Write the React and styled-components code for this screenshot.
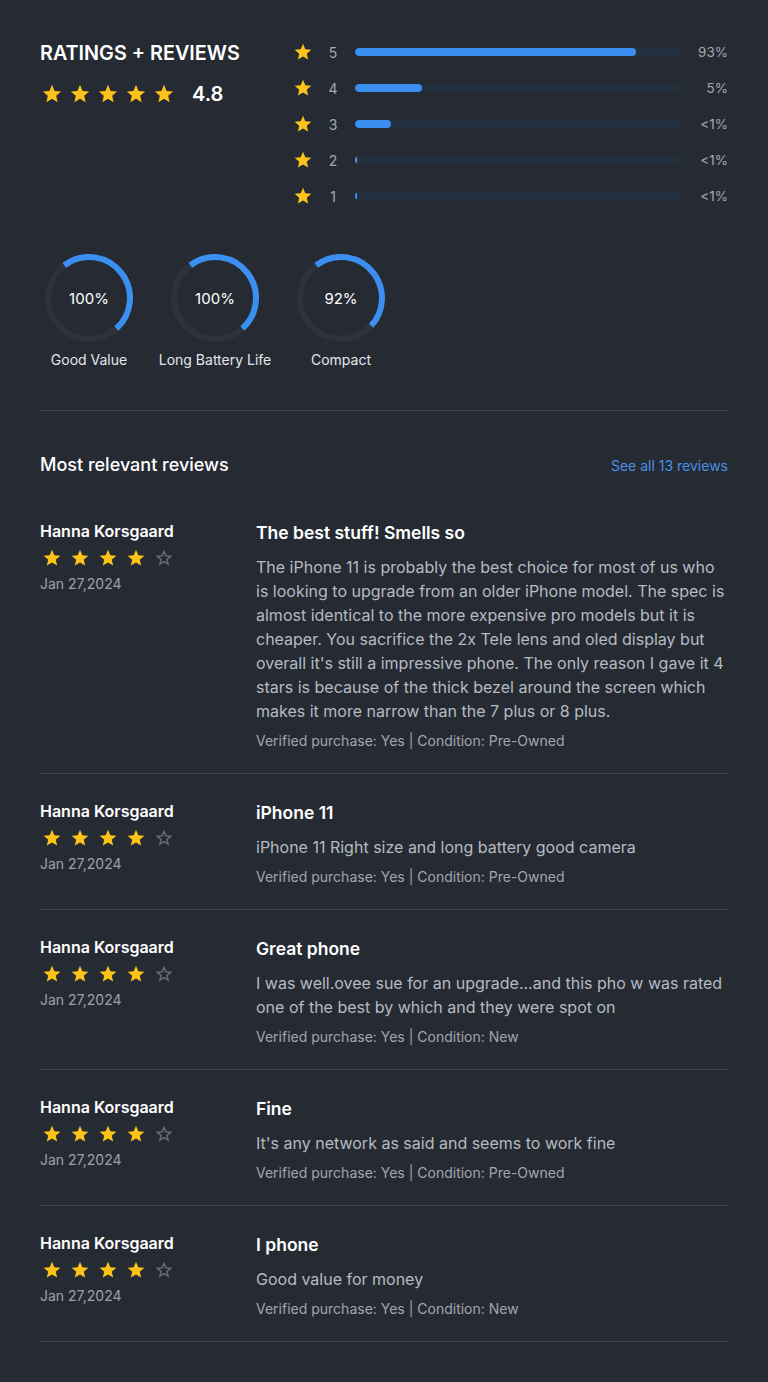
import React from "react";
import styled, { createGlobalStyle } from "styled-components";

const GlobalStyle = createGlobalStyle`
  html, body {
    margin: 0;
    padding: 0;
    background: #262b33;
  }
  body {
    font-family: Inter, "Noto Sans", "Liberation Sans", sans-serif;
    color: #f1f3f5;
    -webkit-font-smoothing: antialiased;
  }
`;

const Page = styled.div`
  width: 768px;
  box-sizing: border-box;
  padding: 40px 40px 40px;
  min-height: 1382px;
`;

const Summary = styled.section`
  display: grid;
  grid-template-columns: 253px 1fr;
`;

const Overall = styled.div`
  display: flex;
  flex-direction: column;
  gap: 17px;
  padding-top: 1px;
`;

const Heading = styled.h2`
  margin: 0;
  font-size: 19.8px;
  line-height: 24px;
  font-weight: 600;
  color: #ffffff;
`;

const ScoreRow = styled.div`
  display: flex;
  align-items: center;
`;

const Stars = styled.div`
  display: flex;
  gap: ${(p) => p.$gap}px;
  margin-left: ${(p) => p.$before || 0}px;
  margin-right: ${(p) => p.$after || 0}px;
`;

const Score = styled.span`
  font-size: 20px;
  font-weight: 600;
  color: #ffffff;
`;

const Bars = styled.div`
  display: flex;
  flex-direction: column;
  gap: 12px;
`;

const BarRow = styled.div`
  display: grid;
  grid-template-columns: 18px 44px 1fr 46px;
  align-items: center;
  height: 24px;
`;

const BarNum = styled.span`
  text-align: center;
  font-size: 14px;
  color: #a3a8b0;
`;

const Track = styled.div`
  height: 8px;
  border-radius: 4px;
  background: #243040;
  overflow: hidden;
`;

const Fill = styled.div`
  height: 100%;
  border-radius: 4px;
  background: #3b8ff0;
`;

const Pct = styled.span`
  text-align: right;
  font-size: 13.5px;
  color: #a3a8b0;
`;

const Features = styled.div`
  display: flex;
  gap: 28px;
  margin-top: 46px;
  padding-bottom: 40px;
  border-bottom: 1px solid #3d434c;
`;

const Feature = styled.div`
  width: 98px;
  display: flex;
  flex-direction: column;
  align-items: center;
  gap: 8px;
`;

const Ring = styled.div`
  position: relative;
  width: 88px;
  height: 88px;

  & > span {
    position: absolute;
    inset: 0;
    display: flex;
    align-items: center;
    justify-content: center;
    font-size: 15px;
    font-weight: 400;
    color: #ffffff;
  }
`;

const FeatureLabel = styled.span`
  white-space: nowrap;
  font-size: 14px;
  line-height: 20px;
  color: #e3e6ea;
`;

const ListHeader = styled.div`
  display: flex;
  justify-content: space-between;
  align-items: center;
  padding: 42px 0 17px;
`;

const ListTitle = styled.h3`
  margin: 0;
  font-size: 18px;
  line-height: 24px;
  font-weight: 500;
  color: #ffffff;
`;

const SeeAll = styled.a`
  font-size: 14px;
  color: #4a90e6;
  text-decoration: none;
`;

const Review = styled.article`
  display: grid;
  grid-template-columns: 216px 1fr;
  padding: 27px 0 22px;
  border-bottom: 1px solid #3d434c;
`;

const Author = styled.div`
  display: flex;
  flex-direction: column;
`;

const Name = styled.span`
  font-size: 16px;
  line-height: 20px;
  font-weight: 600;
  color: #ffffff;
  margin-bottom: 7px;
`;

const DateText = styled.span`
  font-size: 14px;
  line-height: 20px;
  color: #9ca1a9;
  margin-top: 6px;
`;

const Body = styled.div`
  display: flex;
  flex-direction: column;
`;

const Title = styled.h4`
  margin: 0 0 10px;
  font-size: 17.5px;
  line-height: 24px;
  font-weight: 600;
  color: #ffffff;
`;

const Text = styled.p`
  margin: 0 0 8px;
  font-size: 16px;
  line-height: 24px;
  color: #b6bac2;
`;

const Meta = styled.span`
  font-size: 14px;
  line-height: 20px;
  color: #a1a6ae;
`;

const StarIcon = ({ size = 20, filled = true }) => (
  <svg width={size} height={size} viewBox="0 0 24 24" style={{ display: "block" }}>
    {filled ? (
      <path
        fill="#fdc319"
        d="M12 17.27L18.18 21l-1.64-7.03L22 9.24l-7.19-.61L12 2 9.19 8.63 2 9.24l5.46 4.73L5.82 21z"
      />
    ) : (
      <path
        fill="#6d727a"
        d="M22 9.24l-7.19-.62L12 2 9.19 8.63 2 9.24l5.46 4.73L5.82 21 12 17.27 18.18 21l-1.63-7.03L22 9.24zM12 15.4l-3.76 2.27 1-4.28-3.32-2.88 4.38-.38L12 6.1l1.71 4.04 4.38.38-3.32 2.88 1 4.28L12 15.4z"
      />
    )}
  </svg>
);

const ProgressRing = ({ value }) => {
  const r = 41;
  const arc = 125 * (value >= 100 ? 1 : 0.97);
  return (
    <Ring>
      <svg width="88" height="88" viewBox="0 0 88 88">
        <circle cx="44" cy="44" r={r} fill="none" stroke="#2e333b" strokeWidth="6" />
        <circle
          cx="44"
          cy="44"
          r={r}
          fill="none"
          stroke="#3b8ff0"
          strokeWidth="6"
          strokeDasharray={`${arc} 1000`}
          transform="rotate(-127 44 44)"
        />
      </svg>
      <span>{value}%</span>
    </Ring>
  );
};

const bars = [
  { n: 5, fill: 86, pct: "93%" },
  { n: 4, fill: 20.5, pct: "5%" },
  { n: 3, fill: 11, pct: "<1%" },
  { n: 2, fill: 0.7, pct: "<1%" },
  { n: 1, fill: 0.7, pct: "<1%" },
];

const features = [
  { value: 100, label: "Good Value" },
  { value: 100, label: "Long Battery Life" },
  { value: 92, label: "Compact" },
];

const reviews = [
  {
    title: "The best stuff! Smells so",
    text: "The iPhone 11 is probably the best choice for most of us who is looking to upgrade from an older iPhone model. The spec is almost identical to the more expensive pro models but it is cheaper. You sacrifice the 2x Tele lens and oled display but overall it's still a impressive phone. The only reason I gave it 4 stars is because of the thick bezel around the screen which makes it more narrow than the 7 plus or 8 plus.",
    condition: "Pre-Owned",
  },
  {
    title: "iPhone 11",
    text: "iPhone 11 Right size and long battery good camera",
    condition: "Pre-Owned",
  },
  {
    title: "Great phone",
    text: "I was well.ovee sue for an upgrade...and this pho w was rated one of the best by which and they were spot on",
    condition: "New",
  },
  {
    title: "Fine",
    text: "It's any network as said and seems to work fine",
    condition: "Pre-Owned",
  },
  {
    title: "I phone",
    text: "Good value for money",
    condition: "New",
  },
];

export default function App() {
  return (
    <>
      <GlobalStyle />
      <Page>
        <Summary>
          <Overall>
            <Heading>RATINGS + REVIEWS</Heading>
            <ScoreRow>
              <Stars $gap={6} $before={1} $after={17}>
                {[0, 1, 2, 3, 4].map((i) => (
                  <StarIcon key={i} size={22} />
                ))}
              </Stars>
              <Score>4.8</Score>
            </ScoreRow>
          </Overall>
          <Bars>
            {bars.map((b) => (
              <BarRow key={b.n}>
                <StarIcon size={20} />
                <BarNum>{b.n}</BarNum>
                <Track>
                  <Fill style={{ width: `${b.fill}%` }} />
                </Track>
                <Pct>{b.pct}</Pct>
              </BarRow>
            ))}
          </Bars>
        </Summary>

        <Features>
          {features.map((f) => (
            <Feature key={f.label}>
              <ProgressRing value={f.value} />
              <FeatureLabel>{f.label}</FeatureLabel>
            </Feature>
          ))}
        </Features>

        <ListHeader>
          <ListTitle>Most relevant reviews</ListTitle>
          <SeeAll href="#">See all 13 reviews</SeeAll>
        </ListHeader>

        {reviews.map((r) => (
          <Review key={r.title}>
            <Author>
              <Name>Hanna Korsgaard</Name>
              <Stars $gap={8} $before={2}>
                {[0, 1, 2, 3, 4].map((i) => (
                  <StarIcon key={i} size={20} filled={i < 4} />
                ))}
              </Stars>
              <DateText>Jan 27,2024</DateText>
            </Author>
            <Body>
              <Title>{r.title}</Title>
              <Text>{r.text}</Text>
              <Meta>Verified purchase: Yes | Condition: {r.condition}</Meta>
            </Body>
          </Review>
        ))}
      </Page>
    </>
  );
}
